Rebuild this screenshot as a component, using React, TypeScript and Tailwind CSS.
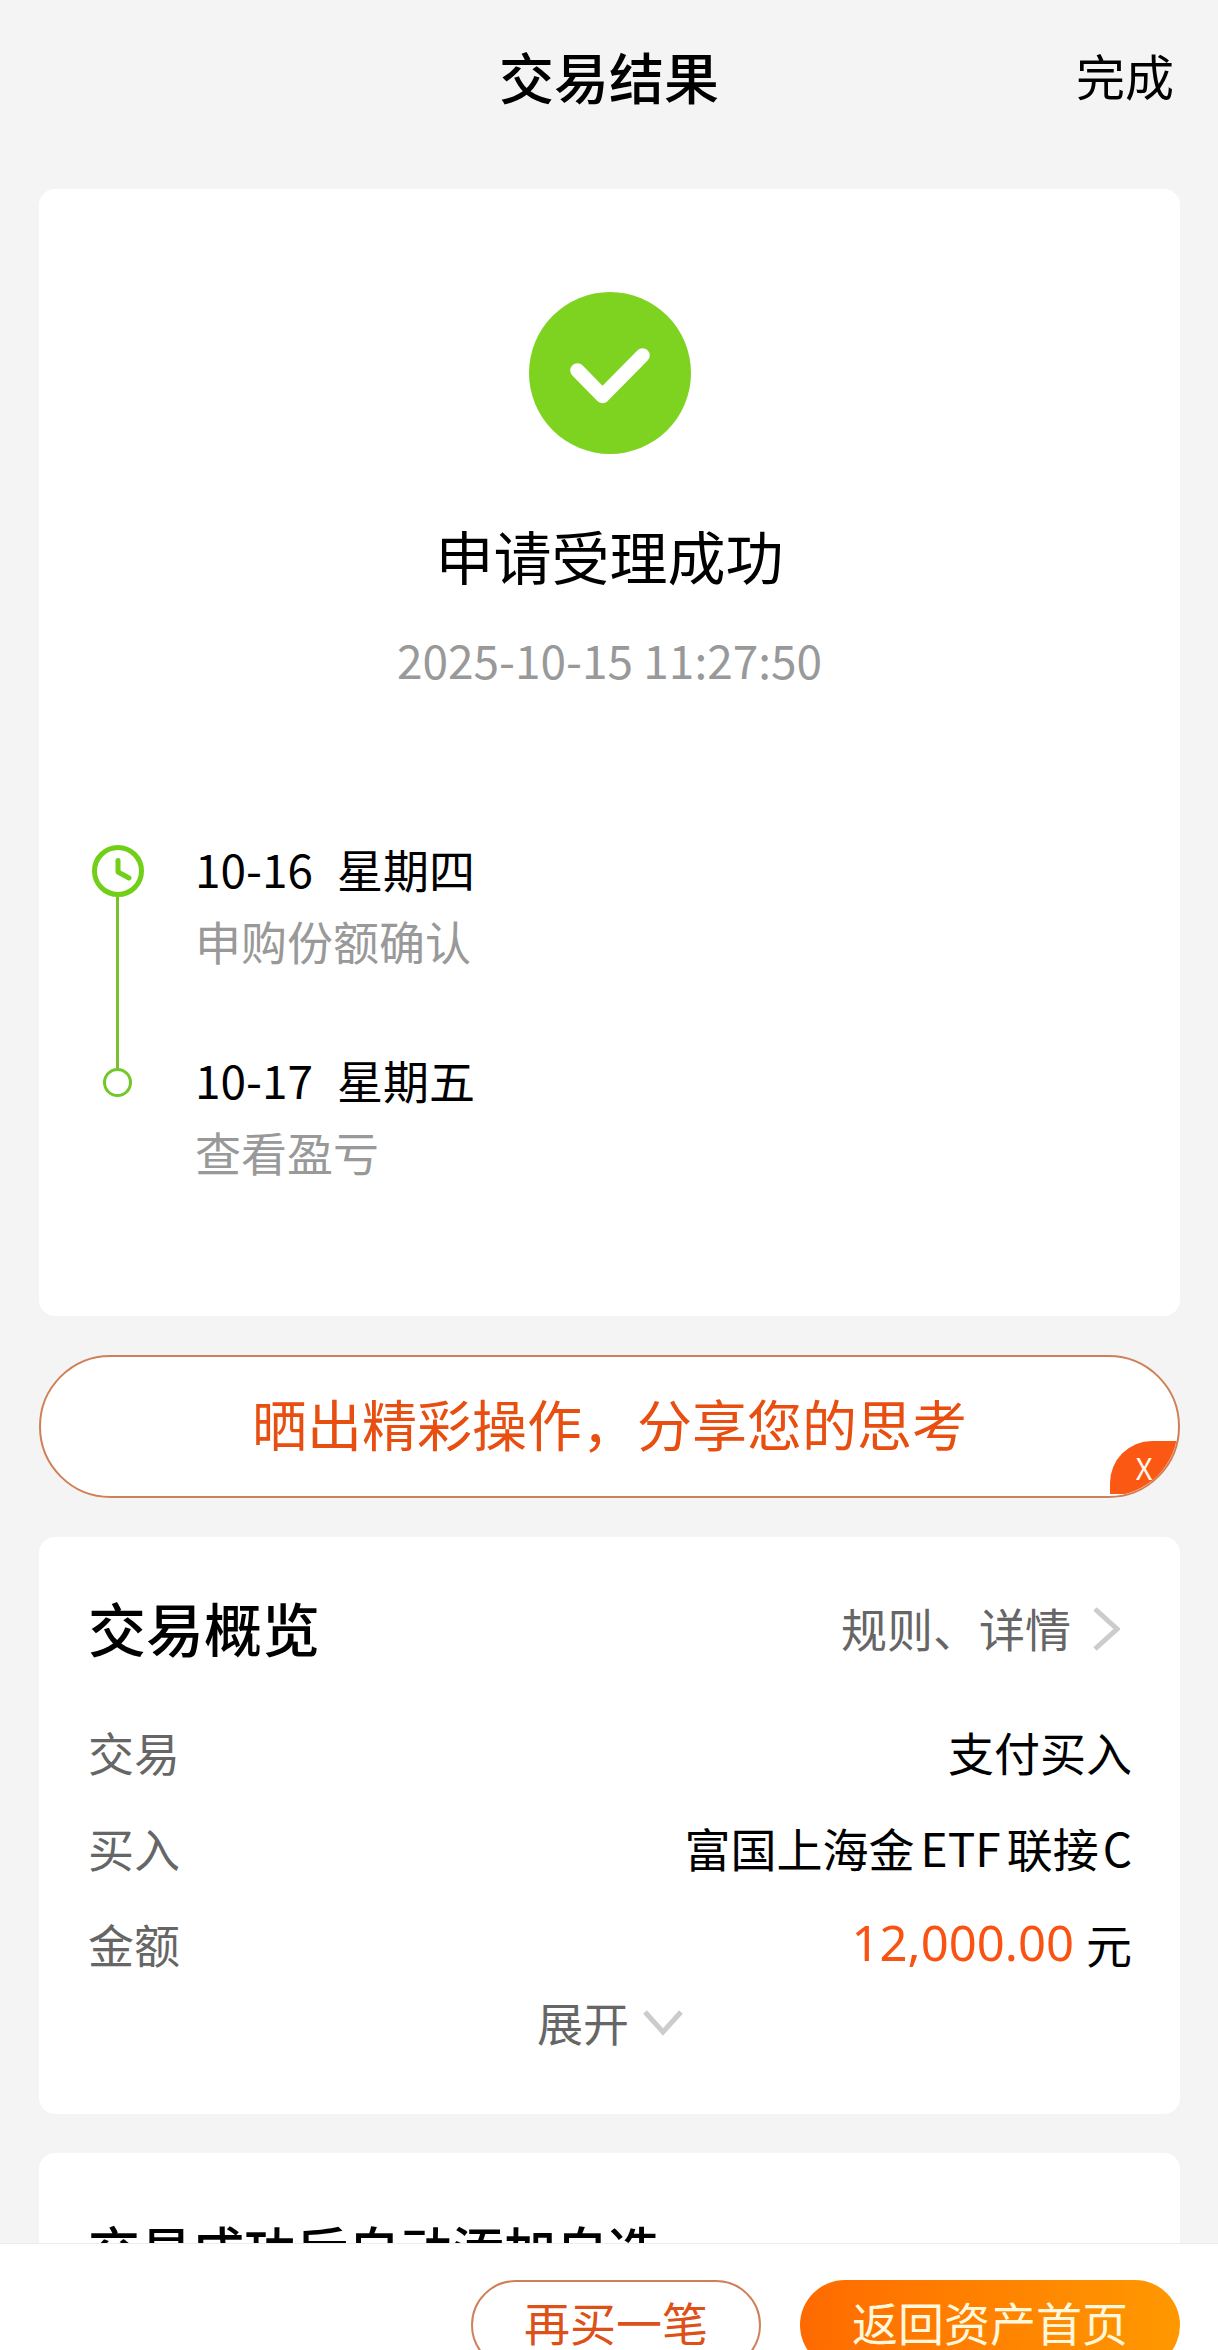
import React from 'react';

interface Step {
  date: string;
  weekday: string;
  note: string;
}

const steps: Step[] = [
  { date: '10-16', weekday: '星期四', note: '申购份额确认' },
  { date: '10-17', weekday: '星期五', note: '查看盈亏' },
];

const SuccessIcon = () => (
  <svg className="w-[162px] h-[162px]" viewBox="0 0 162 162" fill="none" aria-hidden="true">
    <circle cx="81" cy="81" r="81" fill="#7ed321" />
    <path
      d="M48.5 78.5 73.5 104 113.5 63.5"
      stroke="#fff"
      strokeWidth="14.5"
      strokeLinecap="round"
      strokeLinejoin="round"
    />
  </svg>
);

const ClockIcon = () => (
  <svg className="w-[52px] h-[52px]" viewBox="0 0 52 52" fill="none" stroke="#72cf18" aria-hidden="true">
    <circle cx="26" cy="26" r="23.5" strokeWidth="5" />
    <path d="M26 15.5v11.5l11 6" strokeWidth="5" strokeLinecap="round" strokeLinejoin="round" />
  </svg>
);

const Chevron = ({ className, d, viewBox }: { className: string; d: string; viewBox: string }) => (
  <svg className={className} viewBox={viewBox} fill="none" aria-hidden="true">
    <path d={d} stroke="#cccccc" strokeWidth="5" />
  </svg>
);

const Timeline = () => (
  <ol className="mt-[137px] px-[52px] text-[46px] leading-[72px]">
    {steps.map((step, i) => {
      const last = i === steps.length - 1;
      return (
        <li key={step.date} className="flex gap-[51px]">
          <div className="flex w-[53px] flex-col items-center">
            {last ? (
              <>
                <span className="h-[25px] w-[3px] bg-[#78c232]" />
                <span className="h-[29px] w-[29px] rounded-full border-3 border-[#72c827]" />
              </>
            ) : (
              <>
                <span className="h-[13px]" />
                <ClockIcon />
                <span className="w-[3px] flex-1 bg-[#78c232]" />
              </>
            )}
          </div>
          <div className={last ? '' : 'pb-[67px]'}>
            <p className="flex gap-6">
              <span>{step.date}</span>
              <span>{step.weekday}</span>
            </p>
            <p className="text-[#999999]">{step.note}</p>
          </div>
        </li>
      );
    })}
  </ol>
);

const Row = ({ label, children }: { label: string; children: React.ReactNode }) => (
  <div className="flex h-[96px] items-center justify-between">
    <dt className="text-[#666666]">{label}</dt>
    <dd className="flex items-center">{children}</dd>
  </div>
);

const App = () => {
  return (
    <div className="flex h-screen flex-col overflow-hidden bg-[#f4f4f4] font-['Noto_Sans_CJK_SC',sans-serif] text-black">
      <header className="grid h-[150px] shrink-0 grid-cols-[1fr_auto_1fr] items-center px-[44px]">
        <h1 className="col-start-2 text-[55px] font-medium">交易结果</h1>
        <button type="button" className="justify-self-end text-[49px]">完成</button>
      </header>

      <main className="flex min-h-0 flex-1 flex-col gap-[39px] overflow-hidden pt-[39px] pr-[38px] pl-[39px] *:shrink-0">
        <section className="rounded-2xl bg-white pt-[103px] pb-[129px]">
          <div className="flex flex-col items-center">
            <SuccessIcon />
            <h2 className="mt-[61px] text-[58px] leading-[80px]">申请受理成功</h2>
            <time className="mt-[28px] text-[46px] leading-[72px] text-[#999999]">2025-10-15 11:27:50</time>
          </div>
          <Timeline />
        </section>

        <div className="relative h-[143px] overflow-hidden rounded-full border-2 border-[#d08058] bg-white">
          <button type="button" className="h-full w-full pb-2 text-[55px] text-[#e84e10]">
            晒出精彩操作，分享您的思考
          </button>
          <button
            type="button"
            aria-label="关闭"
            className="absolute right-0 bottom-[2px] h-[53px] w-[68px] rounded-tl-[42px] bg-[#fb5813] text-[30px] text-[#fff6e6]"
          >
            X
          </button>
        </div>

        <section className="rounded-2xl bg-white pt-[42px] pr-[48px] pb-[63px] pl-[49px] text-[46px]">
          <div className="flex items-center justify-between leading-[96px]">
            <h2 className="text-[58px] font-medium">交易概览</h2>
            <a href="#detail" className="flex items-center gap-[22px] pr-[12px] text-[#666666]">
              规则、详情
              <Chevron className="mt-1 h-[44px] w-[27px]" viewBox="0 0 27 44" d="M2 2 24 22 2 42" />
            </a>
          </div>
          <dl className="mt-[28px]">
            <Row label="交易">支付买入</Row>
            <Row label="买入">
              富国上海金<span className="mx-1.5">ETF</span>联接<span className="ml-1">C</span>
            </Row>
            <Row label="金额">
              <span className="mr-3 font-['Noto_Sans',sans-serif] text-[49px] text-[#f95314]">12,000.00</span>元
            </Row>
          </dl>
          <button type="button" className="mx-auto flex items-center gap-[14px] leading-[60px] text-[#666666]">
            展开
            <Chevron className="mt-1 h-[26px] w-[40px]" viewBox="0 0 40 26" d="M2 2 20 22 38 2" />
          </button>
        </section>

        <section className="rounded-2xl bg-white px-[49px] pt-[60px] pb-[60px]">
          <h2 className="text-[52px] leading-[72px] font-medium">交易成功后自动添加自选</h2>
        </section>
      </main>

      <footer className="flex h-[107px] shrink-0 items-start justify-end gap-[39px] overflow-hidden border-t border-[#ececec] bg-white px-[38px] pt-[36px] text-[46px]">
        <button type="button" className="h-[90px] shrink-0 rounded-full border-2 border-[#d08058] px-[51px] pb-2 text-[#dd5018]">
          再买一笔
        </button>
        <button
          type="button"
          className="h-[90px] shrink-0 rounded-full bg-linear-to-r from-[#ff6a00] to-[#ff9800] px-[52px] pb-2 text-[#fff8dc]"
        >
          返回资产首页
        </button>
      </footer>
    </div>
  );
};

export default App;
